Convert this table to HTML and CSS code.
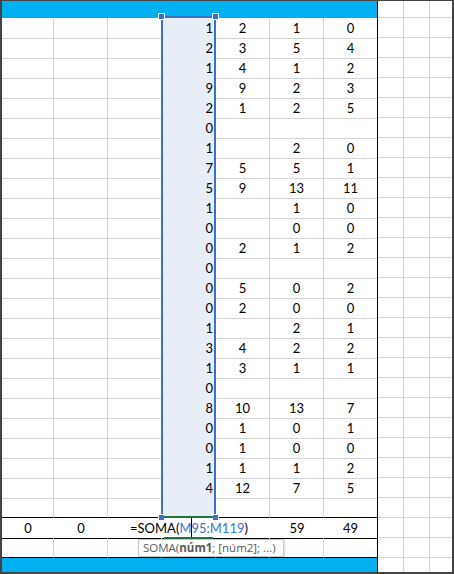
FILE: index.html
```html
<!DOCTYPE html>
<html lang="pt">
<head>
<meta charset="utf-8">
<title>Planilha</title>
<link rel="stylesheet" href="styles.css">
</head>
<body>
<div class="frame">
  <div class="main">
    <div class="bar"></div>
    <div class="row data"><span></span><span></span><span></span><span>1</span><span>2</span><span>1</span><span>0</span></div>
    <div class="row data"><span></span><span></span><span></span><span>2</span><span>3</span><span>5</span><span>4</span></div>
    <div class="row data"><span></span><span></span><span></span><span>1</span><span>4</span><span>1</span><span>2</span></div>
    <div class="row data"><span></span><span></span><span></span><span>9</span><span>9</span><span>2</span><span>3</span></div>
    <div class="row data"><span></span><span></span><span></span><span>2</span><span>1</span><span>2</span><span>5</span></div>
    <div class="row data"><span></span><span></span><span></span><span>0</span><span></span><span></span><span></span></div>
    <div class="row data"><span></span><span></span><span></span><span>1</span><span></span><span>2</span><span>0</span></div>
    <div class="row data"><span></span><span></span><span></span><span>7</span><span>5</span><span>5</span><span>1</span></div>
    <div class="row data"><span></span><span></span><span></span><span>5</span><span>9</span><span>13</span><span>11</span></div>
    <div class="row data"><span></span><span></span><span></span><span>1</span><span></span><span>1</span><span>0</span></div>
    <div class="row data"><span></span><span></span><span></span><span>0</span><span></span><span>0</span><span>0</span></div>
    <div class="row data"><span></span><span></span><span></span><span>0</span><span>2</span><span>1</span><span>2</span></div>
    <div class="row data"><span></span><span></span><span></span><span>0</span><span></span><span></span><span></span></div>
    <div class="row data"><span></span><span></span><span></span><span>0</span><span>5</span><span>0</span><span>2</span></div>
    <div class="row data"><span></span><span></span><span></span><span>0</span><span>2</span><span>0</span><span>0</span></div>
    <div class="row data"><span></span><span></span><span></span><span>1</span><span></span><span>2</span><span>1</span></div>
    <div class="row data"><span></span><span></span><span></span><span>3</span><span>4</span><span>2</span><span>2</span></div>
    <div class="row data"><span></span><span></span><span></span><span>1</span><span>3</span><span>1</span><span>1</span></div>
    <div class="row data"><span></span><span></span><span></span><span>0</span><span></span><span></span><span></span></div>
    <div class="row data"><span></span><span></span><span></span><span>8</span><span>10</span><span>13</span><span>7</span></div>
    <div class="row data"><span></span><span></span><span></span><span>0</span><span>1</span><span>0</span><span>1</span></div>
    <div class="row data"><span></span><span></span><span></span><span>0</span><span>1</span><span>0</span><span>0</span></div>
    <div class="row data"><span></span><span></span><span></span><span>1</span><span>1</span><span>1</span><span>2</span></div>
    <div class="row data"><span></span><span></span><span></span><span>4</span><span>12</span><span>7</span><span>5</span></div>
    <div class="row data end"><span></span><span></span><span></span><span></span><span></span><span></span><span></span></div>
    <div class="row sum"><span>0</span><span>0</span><span></span><span class="formula">=SOMA(<span class="ref">M<span class="caret"></span>95:M119</span>)</span><span></span><span>59</span><span>49</span></div>
    <div class="row after"><span></span><span></span><span></span><span></span><span></span><span></span><span></span></div>
    <div class="bar bottom"></div>

    <div class="selection">
      <i class="handle tl"></i><i class="handle tr"></i><i class="handle bl"></i><i class="handle br"></i>
    </div>
    <div class="tip">SOMA(<b>núm1</b>; [núm2]; ...)</div>
  </div>
  <div class="side"></div>
</div>
</body>
</html>
```
FILE: styles.css
```css
* { box-sizing: border-box; margin: 0; padding: 0; }

body {
  margin: 0;
  background: #fff;
  font-family: Lato, "Liberation Sans", sans-serif;
  font-size: 13px;
  color: #000;
}

.frame {
  width: 454px;
  height: 574px;
  border: 2px solid #444;
  border-top-width: 1px;
  display: flex;
  overflow: hidden;
}

.main {
  position: relative;
  width: 376px;
  flex: none;
  border-right: 1px solid #000;
}

.side {
  flex: 1;
  background-image:
    linear-gradient(to right, transparent 25px, #d4d4d4 25px 26px, transparent 26px 51px, #d4d4d4 51px 52px, transparent 52px),
    repeating-linear-gradient(to bottom, transparent 0 16px, #d4d4d4 16px 17px, transparent 17px 20px);
}

.bar {
  height: 17px;
  background: #00b0f0;
}

.bar.bottom { height: 14px; }

.row {
  display: grid;
  grid-template-columns: 52px repeat(5, 54px) 53px;
  height: 20px;
}

.row > span {
  border-right: 1px solid #d4d4d4;
  border-bottom: 1px solid #d4d4d4;
  padding-top: 1px;
  line-height: 19px;
  text-align: center;
  white-space: nowrap;
}

.row > span:last-child { border-right: 0; }

.data > span:nth-child(4) {
  text-align: right;
  padding-right: 2px;
  background: #e8eef8;
  border-bottom-color: #c8cdd6;
}

.end > span,
.after > span { border-bottom-color: #000; }

.sum > span {
  border-right: 0;
  border-bottom-color: #000;
}

.sum .formula {
  position: relative;
  display: flex;
  justify-content: center;
}

.ref { color: #3d74d2; }

.caret {
  display: inline-block;
  position: relative;
  top: -1px;
  width: 1px;
  height: 19px;
  margin-right: -1px;
  background: #000;
  vertical-align: top;
}

.formula::before,
.formula::after {
  content: "";
  position: absolute;
  left: 2px;
  width: 49px;
  height: 2px;
  background: #217346;
  z-index: 2;
}

.formula::before { top: -2px; }
.formula::after { bottom: -1px; }

.selection {
  position: absolute;
  left: 159px;
  top: 15px;
  width: 55px;
  height: 502px;
  border: 2px solid #3c6fc8;
  z-index: 1;
}

.handle {
  position: absolute;
  width: 7px;
  height: 7px;
  background: #3c6fc8;
  border: 1px solid #fff;
}

.handle.tl { left: -5px; top: -5px; }
.handle.tr { right: -5px; top: -5px; }
.handle.bl { left: -5px; bottom: -5px; }
.handle.br { right: -5px; bottom: -5px; }

.tip {
  position: absolute;
  left: 136px;
  top: 538px;
  width: 146px;
  height: 18px;
  padding-left: 4px;
  border: 1px solid #c6c6c6;
  background: #fff;
  box-shadow: 1px 1px 2px rgba(0, 0, 0, 0.15);
  font-family: "Open Sans", sans-serif;
  font-size: 11.5px;
  line-height: 16px;
  color: #5a5a5a;
  white-space: nowrap;
  z-index: 3;
}

.tip b { font-weight: 700; }
```
